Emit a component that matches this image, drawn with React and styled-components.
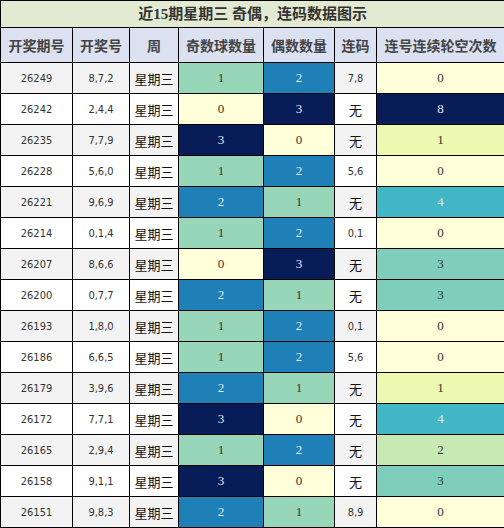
import React from 'react'
import styled, { createGlobalStyle } from "styled-components"

const rows = [
    ["26249", "8,7,2", 1, 2, "7,8", 0],
    ["26242", "2,4,4", 0, 3, "无", 8],
    ["26235", "7,7,9", 3, 0, "无", 1],
    ["26228", "5,6,0", 1, 2, "5,6", 0],
    ["26221", "9,6,9", 2, 1, "无", 4],
    ["26214", "0,1,4", 1, 2, "0,1", 0],
    ["26207", "8,6,6", 0, 3, "无", 3],
    ["26200", "0,7,7", 2, 1, "无", 3],
    ["26193", "1,8,0", 1, 2, "0,1", 0],
    ["26186", "6,6,5", 1, 2, "5,6", 0],
    ["26179", "3,9,6", 2, 1, "无", 1],
    ["26172", "7,7,1", 3, 0, "无", 4],
    ["26165", "2,9,4", 1, 2, "无", 2],
    ["26158", "9,1,1", 3, 0, "无", 3],
    ["26151", "9,8,3", 2, 1, "8,9", 0],
]

const countColors = { 0: "#ffffd9", 1: "#97d6b9", 2: "#1f80b8", 3: "#081d58" }
const gapColors = { 0: "#ffffd9", 1: "#edf8b1", 2: "#c7e9b4", 3: "#7fcdbb", 4: "#41b6c4", 8: "#081d58" }
const darkOnes = ["#1f80b8", "#081d58", "#41b6c4"]

const widths = [72, 57, 49, 85, 71, 42, 128]
const headers = ["开奖期号", "开奖号", "周", "奇数球数量", "偶数数量", "连码", "连号连续轮空次数"]

const App = () => {
    return (
        <>
            <GlobalStyle />
            <Table>
                <colgroup>
                    {widths.map((w, i) => <col key={i} style={{ width: w }} />)}
                </colgroup>
                <thead>
                    <TitleRow>
                        <TitleCell colSpan={7}>近15期星期三 奇偶，连码数据图示</TitleCell>
                    </TitleRow>
                    <HeadRow>
                        {headers.map(h => <HeadCell key={h}>{h}</HeadCell>)}
                    </HeadRow>
                </thead>
                <tbody>
                    {rows.map((r, i) => (
                        <BodyRow key={r[0]} $shade={i % 2 === 0}>
                            <NumCell>{r[0]}</NumCell>
                            <NumCell>{r[1]}</NumCell>
                            <CnCell>星期三</CnCell>
                            <HeatCell $bg={countColors[r[2]]}>{r[2]}</HeatCell>
                            <HeatCell $bg={countColors[r[3]]}>{r[3]}</HeatCell>
                            {r[4] === "无" ? <CnCell>无</CnCell> : <NumCell>{r[4]}</NumCell>}
                            <HeatCell $bg={gapColors[r[5]]}>{r[5]}</HeatCell>
                        </BodyRow>
                    ))}
                </tbody>
            </Table>
        </>
    )
}

const GlobalStyle = createGlobalStyle`
    body {
        margin: 0;
        background: #fff;
        font-family: "Noto Sans CJK SC", sans-serif;
    }
`

const Table = styled.table`
    width: 504px;
    table-layout: fixed;
    border-collapse: collapse;
    border: 1px solid #000;

    td, th {
        border: 1px solid #000;
        padding: 0;
        text-align: center;
    }
`

const TitleRow = styled.tr`
    height: 27px;
`

const TitleCell = styled.th`
    background: #e2ebd2;
    color: #333;
    font-size: 15px;
    font-weight: bold;
    font-family: "Liberation Serif", "Noto Sans CJK SC", serif;
    line-height: 1;
`

const HeadRow = styled.tr`
    height: 35px;
    background: #dbe1f1;
`

const HeadCell = styled.th`
    color: #444;
    font-size: 14px;
    font-weight: bold;
    font-family: "Noto Sans CJK SC", sans-serif;
`

const BodyRow = styled.tr`
    height: 31px;
    background: ${p => (p.$shade ? "#f3f3f3" : "#fff")};
`

const NumCell = styled.td`
    font-family: "DejaVu Sans Condensed", "DejaVu Sans", sans-serif;
    font-size: 11px;
    color: #333;
`

const CnCell = styled.td`
    font-family: "Noto Sans CJK SC", sans-serif;
    font-size: 13px;
    color: #111;
`

const HeatCell = styled.td`
    background: ${p => p.$bg};
    color: ${p => (darkOnes.includes(p.$bg) ? "#e4e8f0" : "#333")};
    font-family: "Liberation Serif", serif;
    font-size: 13px;
`

export default App;
